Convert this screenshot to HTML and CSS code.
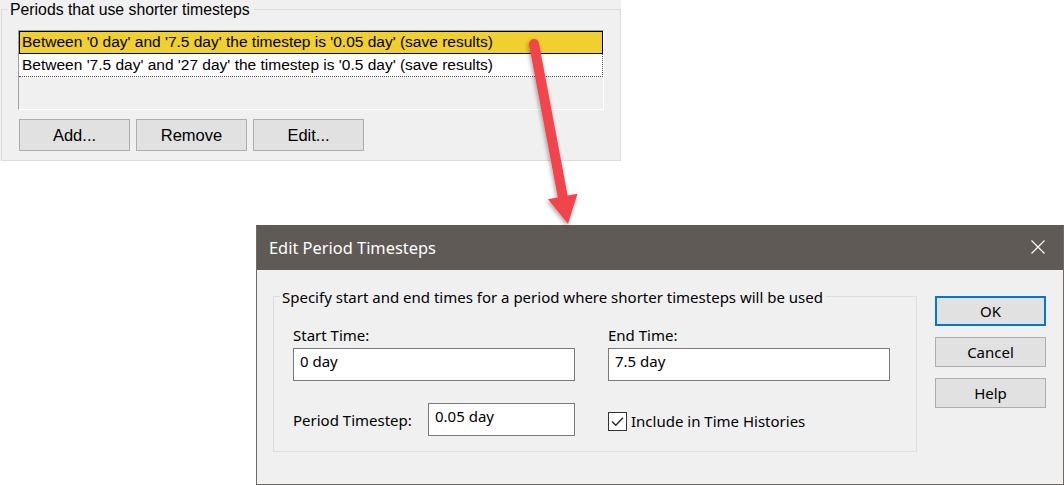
FILE: index.html
```html
<!DOCTYPE html>
<html>
<head>
<meta charset="utf-8">
<link rel="stylesheet" href="styles.css">
</head>
<body>
<div class="page">
  <div class="panel">
    <div class="grp">
      <div class="grp-head"><span class="grp-title">Periods that use shorter timesteps</span></div>
      <div class="grp-body">
        <div class="list">
          <div class="item sel">Between '0 day' and '7.5 day' the timestep is '0.05 day' (save results)</div>
          <div class="item focus">Between '7.5 day' and '27 day' the timestep is '0.5 day' (save results)</div>
        </div>
        <div class="btns">
          <div class="btn">Add...</div>
          <div class="btn">Remove</div>
          <div class="btn">Edit...</div>
        </div>
      </div>
    </div>
  </div>

  <div class="dialog">
    <div class="titlebar">
      <span class="title">Edit Period Timesteps</span>
      <svg class="close" width="16" height="16" viewBox="0 0 16 16"><path d="M1.5 1.5 L14.5 14.5 M14.5 1.5 L1.5 14.5" stroke="#fff" stroke-width="1.2" fill="none"/></svg>
    </div>
    <div class="dbody">
      <div class="dgrp">
        <div class="dgrp-head"><span class="dgrp-title">Specify start and end times for a period where shorter timesteps will be used</span></div>
        <div class="dgrp-body">
          <div class="fields">
            <div class="field">
              <div class="lbl">Start Time:</div>
              <div class="input wide">0 day</div>
            </div>
            <div class="field">
              <div class="lbl">End Time:</div>
              <div class="input wide">7.5 day</div>
            </div>
            <div class="row">
              <div class="lbl">Period Timestep:</div>
              <div class="input short">0.05 day</div>
            </div>
            <div class="row">
              <div class="check"><svg width="17" height="17" viewBox="0 0 17 17"><path d="M3 8.5 L6.8 12.3 L14 4.8" stroke="#222" stroke-width="1.3" fill="none"/></svg></div>
              <div class="lbl">Include in Time Histories</div>
            </div>
          </div>
        </div>
      </div>
      <div class="dbtns">
        <div class="dbtn def">OK</div>
        <div class="dbtn">Cancel</div>
        <div class="dbtn">Help</div>
      </div>
    </div>
  </div>

  <svg class="arrow" width="1064" height="485" viewBox="0 0 1064 485">
    <defs>
      <filter id="sh" x="-50%" y="-20%" width="200%" height="140%">
        <feDropShadow dx="-1" dy="2" stdDeviation="2" flood-color="#000" flood-opacity="0.35"/>
      </filter>
    </defs>
    <g filter="url(#sh)" fill="#f2444b" stroke="#f2444b">
      <line x1="534" y1="44" x2="563" y2="198" stroke-width="10" stroke-linecap="round"/>
      <polygon points="548,199.3 577.5,193.7 568,224" stroke="none"/>
    </g>
  </svg>
</div>
</body>
</html>
```

FILE: styles.css
```css
* { box-sizing: border-box; }
html, body { margin: 0; padding: 0; background: #fff; }
body { width: 1064px; height: 485px; overflow: hidden; }
.page { position: relative; width: 1064px; height: 485px; }

/* top panel */
.panel {
  width: 621px;
  height: 161px;
  background: #f0f0f0;
  padding-left: 1px;
  font-family: "Liberation Sans", Arial, sans-serif;
  color: #000;
}
.grp { width: 620px; }
.grp-head { display: flex; height: 20px; }
.grp-head::before {
  content: "";
  align-self: flex-end;
  width: 6px;
  height: 10px;
  border-top: 1px solid #dcdcdc;
  border-left: 1px solid #dcdcdc;
}
.grp-head::after {
  content: "";
  flex: 1;
  align-self: flex-end;
  height: 10px;
  border-top: 1px solid #dcdcdc;
  border-right: 1px solid #dcdcdc;
}
.grp-title { font-size: 15.8px; line-height: 20px; padding: 0 4px 0 2px; }
.grp-body {
  height: 141px;
  border: 1px solid #dcdcdc;
  border-top: none;
  padding: 10px 0 0 16px;
}
.list {
  width: 586px;
  height: 80px;
  border-top: 1px solid #a0a0a0;
  border-left: 1px solid #a0a0a0;
  border-right: 1px solid #fff;
  border-bottom: 1px solid #fff;
  background: #f0f0f0;
}
.item {
  height: 23px;
  font-size: 15.5px;
  line-height: 20px;
  padding-left: 2px;
  white-space: nowrap;
  background: #fff;
}
.item.sel { background: #f0cf30; border: 1px solid #000; }
.item.focus { border-right: 1px dotted #555; border-bottom: 1px dotted #555; padding-left: 3px; line-height: 21px; }
.btns { display: flex; gap: 6px; margin-top: 9px; padding-left: 1px; }
.btn {
  width: 111px;
  height: 32px;
  background: #e1e1e1;
  border: 1px solid #adadad;
  font-size: 16.5px;
  display: flex;
  align-items: center;
  justify-content: center;
  padding-top: 1px;
}

/* dialog */
.dialog {
  margin: 64px 0 0 256px;
  width: 808px;
  height: 260px;
  border: 1px solid #6f6b68;
  border-top: none;
  background: #f0f0f0;
  font-family: "Noto Sans", "Open Sans", sans-serif;
  color: #000;
}
.titlebar {
  height: 45px;
  background: #5f5a56;
  display: flex;
  align-items: center;
  justify-content: space-between;
  padding: 0 17px 1px 12px;
}
.title { color: #fff; font-size: 16.4px; }
.close { display: block; }
.dbody { display: flex; align-items: flex-start; padding-left: 16px; }
.dgrp { width: 644px; margin-top: 17px; font-size: 15px; }
.dgrp-head { display: flex; height: 20px; }
.dgrp-head::before {
  content: "";
  align-self: flex-end;
  width: 6px;
  height: 10px;
  border-top: 1px solid #dcdcdc;
  border-left: 1px solid #dcdcdc;
}
.dgrp-head::after {
  content: "";
  flex: 1;
  align-self: flex-end;
  height: 10px;
  border-top: 1px solid #dcdcdc;
  border-right: 1px solid #dcdcdc;
}
.dgrp-title { line-height: 20px; padding: 0 3px 0 2px; white-space: nowrap; }
.dgrp-body {
  height: 145px;
  border: 1px solid #dcdcdc;
  border-top: none;
  padding: 18px 0 0 19px;
}
.fields {
  display: grid;
  grid-template-columns: 282px 282px;
  column-gap: 33px;
  row-gap: 22px;
}
.lbl { line-height: 20px; white-space: nowrap; }
.field .lbl { margin-bottom: 3px; }
.input {
  height: 33px;
  background: #fff;
  border: 1px solid #7a7a7a;
  padding: 2px 0 0 6px;
  line-height: 20px;
  white-space: nowrap;
}
.input.wide { width: 282px; }
.input.short { width: 147px; }
.row { display: flex; align-items: center; height: 33px; }
.row .input.short { margin-left: auto; }
.check {
  width: 19px;
  height: 19px;
  border: 1px solid #333;
  background: #fff;
  margin-right: 4px;
  margin-top: 4px;
}
.check svg { display: block; }
.row .lbl { margin-top: 1px; }
.row .check + .lbl { margin-top: 2px; }
.dbtns {
  display: flex;
  flex-direction: column;
  gap: 11px;
  margin: 26px 0 0 18px;
}
.dbtn {
  width: 111px;
  height: 30px;
  background: #e1e1e1;
  border: 1px solid #adadad;
  font-size: 15px;
  display: flex;
  align-items: center;
  justify-content: center;
}
.dbtn.def { border: 2px solid #0078d7; }

.arrow { position: absolute; left: 0; top: 0; pointer-events: none; }
```
